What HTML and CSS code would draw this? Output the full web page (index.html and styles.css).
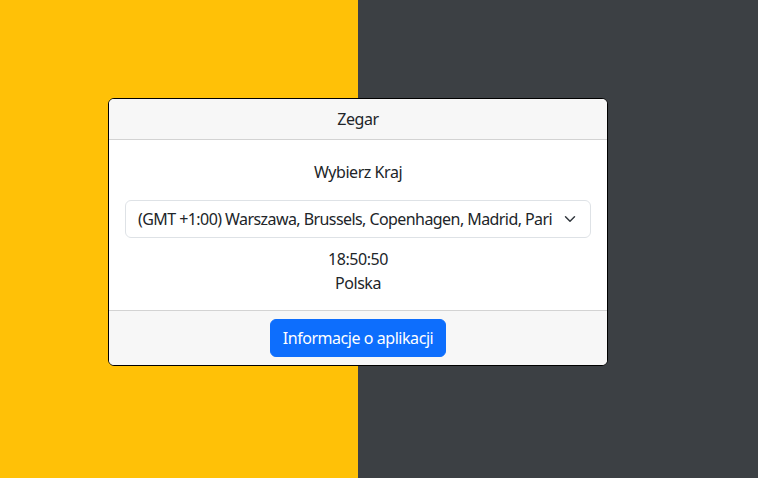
FILE: index.html
```html
<!DOCTYPE html>
<html lang="pl">
<head>
<meta charset="utf-8">
<title>Zegar</title>
<link rel="stylesheet" href="styles.css">
</head>
<body>
<div class="page">
  <div class="half half-warning"></div>
  <div class="half half-dark"></div>
  <div class="card">
    <div class="card-header">Zegar</div>
    <div class="card-body">
      <p class="label">Wybierz Kraj</p>
      <div class="select">
        <span class="select-text">(GMT +1:00) Warszawa, Brussels, Copenhagen, Madrid, Pari</span>
        <svg class="chevron" width="16" height="12" viewBox="0 0 16 16" aria-hidden="true"><path d="m2 5 6 6 6-6" fill="none" stroke="#343a40" stroke-width="2" stroke-linecap="round" stroke-linejoin="round"/></svg>
      </div>
      <p class="time">18:50:50</p>
      <p class="country">Polska</p>
    </div>
    <div class="card-footer">
      <button class="btn" type="button">Informacje o aplikacji</button>
    </div>
  </div>
</div>
</body>
</html>
```

FILE: styles.css
```css
* { box-sizing: border-box; }
html, body { margin: 0; padding: 0; height: 100%; }
body {
  font-family: "Noto Sans", "Open Sans", sans-serif;
  font-size: 16px;
  line-height: 24px;
  letter-spacing: -0.45px;
  color: #212529;
}
.page {
  position: relative;
  display: grid;
  grid-template-columns: 358px 1fr;
  height: 478px;
  overflow: hidden;
}
.half-warning { background: #ffc107; }
.half-dark { background: #3c4044; }
.card {
  position: absolute;
  left: 108px;
  top: 98px;
  width: 500px;
  background: #fff;
  border: 1px solid #000;
  border-radius: 6px;
  overflow: hidden;
  text-align: center;
}
.card-header {
  height: 41px;
  padding: 8px 16px;
  background: #f7f7f7;
  border-bottom: 1px solid #d3d3d3;
}
.card-body {
  padding: 20px 16px 15px;
}
.card-body p { margin: 0; }
.label { margin-bottom: 16px !important; }
.select {
  display: flex;
  align-items: center;
  height: 38px;
  padding: 0 12px;
  border: 1px solid #dee2e6;
  border-radius: 6px;
  text-align: left;
}
.select-text {
  flex: 1;
  white-space: nowrap;
  letter-spacing: -0.57px;
  margin-right: 4px;
}
.chevron { flex: none; }
.time { margin-top: 9px !important; }
.card-footer {
  padding: 8px 16px;
  background: #f7f7f7;
  border-top: 1px solid #d3d3d3;
}
.btn {
  height: 38px;
  padding: 6px 12px;
  font: inherit;
  letter-spacing: inherit;
  color: #fff;
  background: #0d6efd;
  border: 1px solid #0d6efd;
  border-radius: 6px;
}
```
